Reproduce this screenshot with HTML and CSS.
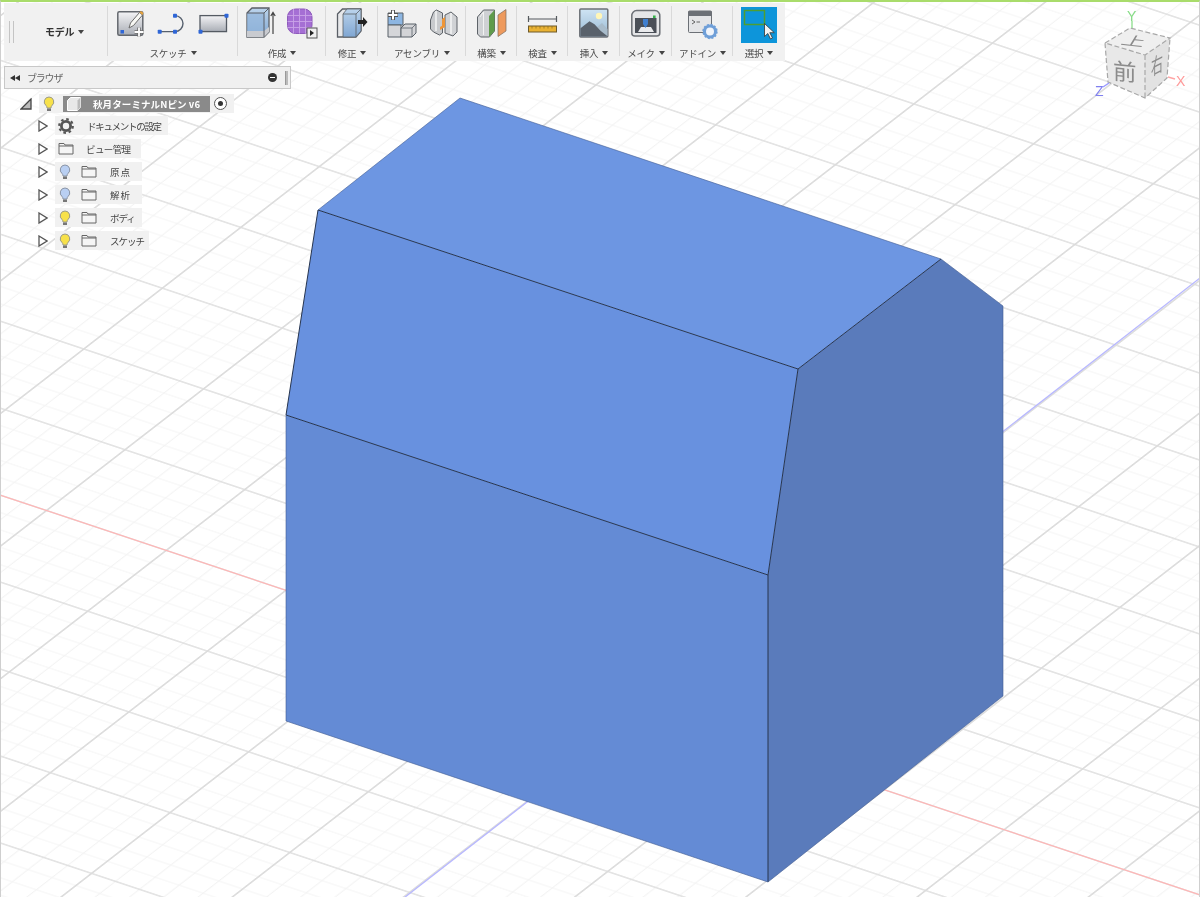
FILE: index.html
```html
<!DOCTYPE html>
<html lang="ja">
<head>
<meta charset="utf-8">
<title>モデル</title>
<link rel="stylesheet" href="styles.css">
</head>
<body>
<div class="app">
  <svg class="scene" viewBox="0 0 1200 897" width="1200" height="897">
    <defs>
      <pattern id="grid" width="100" height="100" patternUnits="userSpaceOnUse" patternTransform="matrix(1.197 0.399 0.785 -0.608 645 710)">
        <path class="minor" d="M20 0V100M40 0V100M60 0V100M80 0V100M0 20H100M0 40H100M0 60H100M0 80H100"/>
        <path class="major" d="M0 0V100M100 0V100M0 0H100M0 100H100"/>
      </pattern>
    </defs>
    <rect width="1200" height="897" fill="url(#grid)"/>
    <path class="axis-x" d="M0 495L1200 895"/>
    <path class="axis-z" d="M400 901L1200 278"/>
    <polygon class="f-top" points="460,98 941,259 798,369 318,210"/>
    <polygon class="f-slant" points="318,210 798,369 768,575 286,415"/>
    <polygon class="f-front" points="286,415 768,575 768,882 286,721"/>
    <polygon class="f-side" points="941,259 1003,306 1003,696 768,882 768,575 798,369"/>
    <path class="edge" d="M318 210L798 369L941 259M286 415L768 575L798 369M768 575V882M318 210L286 415"/>
    <path class="edge-soft" d="M318 210L460 98L941 259L1003 306V696L768 882L286 721V415"/>
  </svg>

  <div class="ui">
    <header class="toolbar">
      <div class="group group-mode">
        <span class="grip"></span>
        <span class="mode">モデル<i class="caret"></i></span>
      </div>
      <section class="group">
        <div class="icons icons-sketch">
          <svg viewBox="119 7 30 32" width="30" height="32"><defs><linearGradient id="plate" x1="0" y1="0" x2="0" y2="1"><stop offset="0" stop-color="#f4f4f6"/><stop offset="1" stop-color="#a9adb5"/></linearGradient></defs><rect x="119.800" y="11.800" width="25" height="23.500" rx="1.500" fill="url(#plate)" stroke="#64686e" stroke-width="1.500"/><path d="M131 28l1.500-5 9-10.500 3 2.500-9 10.500z" fill="#f8f8f4" stroke="#6b6b6b"/><path d="M141.500 12.500l1.500-1.500 2.500 2-1.200 2z" fill="#e8a33c"/><rect x="122.500" y="30" width="3.500" height="3.500" fill="#2f66d6"/><path d="M141 27.500v9M136.500 32h9" stroke="#6b6b6b" stroke-width="3.500"/><path d="M141 27.500v9M136.500 32h9" stroke="#fff" stroke-width="1.800"/></svg>
          <svg viewBox="157 7 34 32" width="34" height="32"><path d="M161.600 31.600H177A8 8 0 0 0 177 15.600" fill="none" stroke="#56606e" stroke-width="1.400"/><rect x="159.700" y="29.700" width="4" height="4" rx=".8" fill="#2f66d6"/><rect x="175" y="29.700" width="4" height="4" rx=".8" fill="#2f66d6"/><rect x="175" y="13.700" width="4" height="4" rx=".8" fill="#2f66d6"/></svg>
          <svg viewBox="199 7 33 32" width="33" height="32"><rect x="202" y="15.600" width="26.500" height="16" fill="url(#plate)" stroke="#555b63" stroke-width="1.300"/><rect x="226.500" y="13.800" width="4" height="4" rx=".8" fill="#2f66d6"/><rect x="200.500" y="29.700" width="4" height="4" rx=".8" fill="#2f66d6"/></svg>
        </div>
        <div class="label"><span>スケッチ</span><i class="caret"></i></div>
      </section>
      <section class="group">
        <div class="icons icons-create">
          <svg viewBox="247 7 32 32" width="32" height="32"><defs><linearGradient id="blue" x1="0" y1="0" x2="0" y2="1"><stop offset="0" stop-color="#bcd4ec"/><stop offset="1" stop-color="#7fa6d2"/></linearGradient></defs><path d="M248 13l5-5h17v24l-5 5h-17z" fill="url(#blue)" stroke="#5a5f66" stroke-width="1.300"/><path d="M248 13h17v18h-17z" fill="#94b6dc" opacity=".7"/><path d="M248 31h17l5-4v5l-5 5h-17z" fill="#c9cbd0"/><path d="M248 13h17l5-5M265 13v24" fill="none" stroke="#5a5f66"/><path d="M274 34V13M271.800 16l2.200-3.500 2.200 3.500" fill="none" stroke="#444" stroke-width="1.200"/></svg>
          <svg viewBox="288 7 31 32" width="31" height="32"><rect x="288.500" y="9" width="24.500" height="24.500" rx="8" fill="#a56fd4" stroke="#8e5bbb"/><path d="M288.500 15.500h24.500M288.500 21.500h24.500M288.500 27.500h24.500M294.500 9v24.500M300.500 9v24.500M306.500 9v24.500" stroke="#c9a4e8" stroke-width=".9"/><rect x="308" y="28" width="10" height="10" fill="#f0f0f0" stroke="#555"/><path d="M311 30l4 3-4 3z" fill="#222"/></svg>
        </div>
        <div class="label"><span>作成</span><i class="caret"></i></div>
      </section>
      <section class="group">
        <div class="icons">
          <svg viewBox="337 7 31 32" width="31" height="32"><path d="M337.500 14l5-5h18.500v22l-5 6h-18.500z" fill="#e7e8ea" stroke="#5a5f66" stroke-width="1.300"/><path d="M343 14l4-5h14v22l-5 6h-13z" fill="url(#blue)" stroke="#5a5f66" stroke-width=".8"/><path d="M343 14h13v23M356 14l5-5" fill="none" stroke="#5a5f66" stroke-width=".8"/><path d="M358 20h5v-3l4.500 5-4.500 5v-3h-5z" fill="#222"/></svg>
        </div>
        <div class="label"><span>修正</span><i class="caret"></i></div>
      </section>
      <section class="group">
        <div class="icons icons-assembly">
          <svg viewBox="386 7 30 32" width="30" height="32"><path d="M387 13h15v12h-15z" fill="#8db6e2" stroke="#596068"/><path d="M387 25h13v12h-13z" fill="#d5d6d9" stroke="#596068"/><path d="M400 28l4-4h11v9l-4 4h-11z" fill="#d3d4d7" stroke="#596068"/><path d="M400 28h11v9M411 28l4-4" fill="none" stroke="#596068" stroke-width=".8"/><path d="M392 10v10M387 15h10" stroke="#555" stroke-width="4"/><path d="M392 10.500v9M387.500 15h9" stroke="#fff" stroke-width="2"/></svg>
          <svg viewBox="428 7 29 32" width="29" height="32"><path d="M429.500 20l3-8 3-2 6 3v20l-3 2-6-3-3-3z" fill="#c8cacd" stroke="#5e6369"/><path d="M435 11v20" stroke="#f4f4f4" stroke-width="1.500"/><path d="M444 15l6-3 6 5v15l-4 4-8-3z" fill="#d0d2d5" stroke="#5e6369"/><path d="M450 13v21" stroke="#f4f4f4" stroke-width="1.500"/><path d="M441 19l3-2v9l-3 2z" fill="#ef9637"/><path d="M439 27l5-3v3l-5 3z" fill="#ef9637"/></svg>
        </div>
        <div class="label"><span>アセンブリ</span><i class="caret"></i></div>
      </section>
      <section class="group">
        <div class="icons">
          <svg viewBox="477 7 30 32" width="30" height="32"><path d="M477.500 17l6-7h11v21l-5 6h-9l-3-3z" fill="#cfd1d4" stroke="#5e6369"/><path d="M489 16l5.500-6v21l-5.500 6z" fill="#5f9b4b"/><path d="M480 17l3.500-5v23" fill="none" stroke="#f2f2f2"/><path d="M498 15l8-5.500V31l-8 5.500z" fill="#ee9a5d" stroke="#7c6a5c" stroke-width=".7"/></svg>
        </div>
        <div class="label"><span>構築</span><i class="caret"></i></div>
      </section>
      <section class="group">
        <div class="icons">
          <svg viewBox="528 7 30 32" width="30" height="32"><path d="M528.500 19h28M528.500 16v6M556.500 16v6" fill="none" stroke="#55595e" stroke-width="1.200"/><rect x="528.500" y="26" width="28" height="6" fill="#e9b233" stroke="#6e5a2a"/><path d="M532 26v2.500M536 26v2.500M540 26v2.500M544 26v2.500M548 26v2.500M552 26v2.500" stroke="#8a6b1f" stroke-width=".7"/></svg>
        </div>
        <div class="label"><span>検査</span><i class="caret"></i></div>
      </section>
      <section class="group">
        <div class="icons">
          <svg viewBox="580 7 30 32" width="30" height="32"><defs><linearGradient id="sky" x1="0" y1="0" x2="0" y2="1"><stop offset="0" stop-color="#cfe4f4"/><stop offset="1" stop-color="#97b8d2"/></linearGradient></defs><rect x="580.800" y="9" width="28" height="28" rx="1" fill="url(#sky)" stroke="#6c7076" stroke-width="1.500"/><circle cx="600" cy="16" r="3.200" fill="#fff6b8"/><path d="M597 28l6-5 5.500 6v7h-12z" fill="#a9bccb"/><path d="M581.500 36.300v-8l9-7 5 3 6 6.500 7 5.500z" fill="#59616b"/></svg>
        </div>
        <div class="label"><span>挿入</span><i class="caret"></i></div>
      </section>
      <section class="group">
        <div class="icons">
          <svg viewBox="632 7 30 32" width="30" height="32"><path d="M632.800 16a5 5 0 0 1 5-5.500h18a5 5 0 0 1 5 5.500v17a3 3 0 0 1-3 3h-22a3 3 0 0 1-3-3z" fill="#e4e5e7" stroke="#6c7076" stroke-width="1.500"/><rect x="636" y="18" width="21.500" height="15" fill="#4a4f57"/><path d="M639 32l3-5h10l3 5z" fill="#e9eaec"/><path d="M644 19h5v5l-2.500 4-2.500-4z" fill="#3f7fcf"/><rect x="654" y="15.500" width="2.600" height="2.600" fill="#36b24a"/></svg>
        </div>
        <div class="label"><span>メイク</span><i class="caret"></i></div>
      </section>
      <section class="group">
        <div class="icons">
          <svg viewBox="688 7 30 32" width="30" height="32"><rect x="688.500" y="11" width="23" height="21.500" rx="1" fill="#e4e5e7" stroke="#6c7076"/><rect x="688.500" y="11" width="23" height="5" fill="#6c7076"/><path d="M692 20l3 2-3 2M696.500 22h3.500" fill="none" stroke="#555" stroke-width=".9"/><circle cx="710" cy="31.500" r="5.500" fill="#f0f4fa" stroke="#6f9fd8" stroke-width="3"/><circle cx="710" cy="31.500" r="6.800" fill="none" stroke="#6f9fd8" stroke-width="1.800" stroke-dasharray="2 1.600"/><circle cx="710" cy="31.500" r="2.300" fill="#f0f4fa"/></svg>
        </div>
        <div class="label"><span>アドイン</span><i class="caret"></i></div>
      </section>
      <section class="group group-last">
        <div class="icons">
          <svg viewBox="741 6 36 36" width="36" height="36"><rect x="741" y="6" width="36" height="36" fill="#0d95da"/><rect x="744.500" y="9.500" width="20" height="14" fill="none" stroke="#4f9e31" stroke-width="1.500"/><path d="M764.500 22.500v13l3.300-3 2.700 5.500 2-1-2.700-5.300h4.500z" fill="#f2f2f2" stroke="#333" stroke-width=".8"/></svg>
        </div>
        <div class="label"><span>選択</span><i class="caret"></i></div>
      </section>
    </header>

    <div class="browser">
      <svg class="collapse" viewBox="0 0 10 6" width="10" height="6"><path d="M5 0v6L0 3zM10 0v6L5 3z" fill="#333"/></svg>
      <span class="browser-title">ブラウザ</span>
      <span class="minus"></span>
      <span class="browser-grip"></span>
    </div>

    <ul class="tree">
      <li class="row row-root">
        <svg class="root-toggle" viewBox="0 0 12 12" width="12" height="12"><path d="M11 1v10H1z" fill="#bbb" stroke="#444" stroke-width="1.300"/></svg>
        <div class="row-body root-body">
          <svg class="bulb" viewBox="0 0 12 16" width="12" height="16"><path d="M6 1a4.800 4.800 0 0 0-3 8.500c.7.700 1 1.500 1 2.500h4c0-1 .3-1.800 1-2.500A4.800 4.800 0 0 0 6 1z" fill="#f7e14a" stroke="#9a9a8a"/><rect x="4" y="12.500" width="4" height="2.500" fill="#777"/></svg>
          <div class="doc-name">
            <svg viewBox="0 0 16 16" width="16" height="16"><path d="M1.500 4.500L4.500 1.500h10v10l-3 3h-10z" fill="#e8e8e8" stroke="#fff"/><path d="M11.500 4.500v10l3-3v-10z" fill="#bbb"/></svg>
            <span>秋月ターミナルNピン v6</span>
          </div>
          <span class="radio"></span>
        </div>
      </li>
      <li class="row">
        <svg class="toggle" viewBox="0 0 10 12" width="10" height="12"><path d="M1 1l8 5-8 5z" fill="#fff" stroke="#555" stroke-width="1.300"/></svg>
        <div class="row-body w-doc">
          <svg class="gear" viewBox="0 0 16 16" width="16" height="16"><circle cx="8" cy="8" r="4.600" fill="none" stroke="#555" stroke-width="2.800"/><circle cx="8" cy="8" r="6.800" fill="none" stroke="#555" stroke-width="2.200" stroke-dasharray="2.600 2.740"/></svg>
          <span class="row-text text-doc">ドキュメントの設定</span>
        </div>
      </li>
      <li class="row">
        <svg class="toggle" viewBox="0 0 10 12" width="10" height="12"><path d="M1 1l8 5-8 5z" fill="#fff" stroke="#555" stroke-width="1.300"/></svg>
        <div class="row-body w-view">
          <svg class="folder folder-first" viewBox="0 0 16 13" width="16" height="13"><path d="M1 12V1.500h5l1 1.500h8v9zM1 4h14" fill="#f5f5f5" stroke="#666"/></svg>
          <span class="row-text text-view">ビュー管理</span>
        </div>
      </li>
      <li class="row">
        <svg class="toggle" viewBox="0 0 10 12" width="10" height="12"><path d="M1 1l8 5-8 5z" fill="#fff" stroke="#555" stroke-width="1.300"/></svg>
        <div class="row-body w-folder">
          <svg class="bulb" viewBox="0 0 12 16" width="12" height="16"><path d="M6 1a4.800 4.800 0 0 0-3 8.500c.7.700 1 1.500 1 2.500h4c0-1 .3-1.800 1-2.500A4.800 4.800 0 0 0 6 1z" fill="#b9cff2" stroke="#8a94a5"/><rect x="4" y="12.500" width="4" height="2.500" fill="#777"/></svg>
          <svg class="folder" viewBox="0 0 16 13" width="16" height="13"><path d="M1 12V1.500h5l1 1.500h8v9zM1 4h14" fill="#f5f5f5" stroke="#666"/></svg>
          <span class="row-text">原点</span>
        </div>
      </li>
      <li class="row">
        <svg class="toggle" viewBox="0 0 10 12" width="10" height="12"><path d="M1 1l8 5-8 5z" fill="#fff" stroke="#555" stroke-width="1.300"/></svg>
        <div class="row-body w-folder">
          <svg class="bulb" viewBox="0 0 12 16" width="12" height="16"><path d="M6 1a4.800 4.800 0 0 0-3 8.500c.7.700 1 1.500 1 2.500h4c0-1 .3-1.800 1-2.500A4.800 4.800 0 0 0 6 1z" fill="#b9cff2" stroke="#8a94a5"/><rect x="4" y="12.500" width="4" height="2.500" fill="#777"/></svg>
          <svg class="folder" viewBox="0 0 16 13" width="16" height="13"><path d="M1 12V1.500h5l1 1.500h8v9zM1 4h14" fill="#f5f5f5" stroke="#666"/></svg>
          <span class="row-text">解析</span>
        </div>
      </li>
      <li class="row">
        <svg class="toggle" viewBox="0 0 10 12" width="10" height="12"><path d="M1 1l8 5-8 5z" fill="#fff" stroke="#555" stroke-width="1.300"/></svg>
        <div class="row-body w-folder">
          <svg class="bulb" viewBox="0 0 12 16" width="12" height="16"><path d="M6 1a4.800 4.800 0 0 0-3 8.500c.7.700 1 1.500 1 2.500h4c0-1 .3-1.800 1-2.500A4.800 4.800 0 0 0 6 1z" fill="#f7e14a" stroke="#9a9a8a"/><rect x="4" y="12.500" width="4" height="2.500" fill="#777"/></svg>
          <svg class="folder" viewBox="0 0 16 13" width="16" height="13"><path d="M1 12V1.500h5l1 1.500h8v9zM1 4h14" fill="#f5f5f5" stroke="#666"/></svg>
          <span class="row-text row-kana">ボディ</span>
        </div>
      </li>
      <li class="row">
        <svg class="toggle" viewBox="0 0 10 12" width="10" height="12"><path d="M1 1l8 5-8 5z" fill="#fff" stroke="#555" stroke-width="1.300"/></svg>
        <div class="row-body w-sketch">
          <svg class="bulb" viewBox="0 0 12 16" width="12" height="16"><path d="M6 1a4.800 4.800 0 0 0-3 8.500c.7.700 1 1.500 1 2.500h4c0-1 .3-1.800 1-2.500A4.800 4.800 0 0 0 6 1z" fill="#f7e14a" stroke="#9a9a8a"/><rect x="4" y="12.500" width="4" height="2.500" fill="#777"/></svg>
          <svg class="folder" viewBox="0 0 16 13" width="16" height="13"><path d="M1 12V1.500h5l1 1.500h8v9zM1 4h14" fill="#f5f5f5" stroke="#666"/></svg>
          <span class="row-text row-kana">スケッチ</span>
        </div>
      </li>
    </ul>
  </div>

  <svg class="viewcube" viewBox="1085 5 105 100" width="105" height="100">
    <path class="cube-top" d="M1105 43L1130 28L1170 38L1145 55Z"/>
    <path class="cube-front" d="M1105 43L1145 55V98L1108 82Z"/>
    <path class="cube-right" d="M1145 55L1170 38L1167 78L1145 98Z"/>
    <path class="cube-edge" d="M1105 43L1130 28L1170 38L1145 55L1105 43L1108 82L1145 98L1167 78L1170 38M1145 55V98"/>
    <text class="cube-text" transform="matrix(.95 .1 -.3 .5 1120 44.300)" font-size="24">上</text>
    <text class="cube-text" transform="matrix(.98 .1 0 .95 1113 79)" font-size="24">前</text>
    <text class="cube-text" transform="matrix(.5 -.25 0 .9 1151 76)" font-size="24">右</text>
    <path class="ax-y" d="M1132 28V21"/>
    <path class="ax-x" d="M1168 77L1175 79"/>
    <path class="ax-z" d="M1103 87L1109 83"/>
    <text class="lab lab-y" x="1127" y="21">Y</text>
    <text class="lab lab-x" x="1176" y="86">X</text>
    <text class="lab lab-z" x="1095" y="96">Z</text>
  </svg>
</div>
</body>
</html>
```
FILE: styles.css
```css
* { box-sizing: border-box; }
html, body { margin: 0; padding: 0; background: #fff; }
body { font-family: "Noto Sans CJK JP", "Noto Sans", sans-serif; }
ul { list-style: none; margin: 0; padding: 0; }

.app {
  position: relative;
  width: 1200px;
  height: 897px;
  overflow: hidden;
  background: #fff;
  border-top: 2px solid #a9dc6b;
  border-left: 1px solid #cfcfcf;
  border-right: 1px solid #cfcfcf;
}

/* 3D viewport */
.scene { position: absolute; left: -1px; top: -2px; filter: blur(.3px); }
.minor { stroke: #f3f3f3; stroke-width: 1; fill: none; }
.major { stroke: #dcdcdc; stroke-width: 1.500; fill: none; }
.axis-x { stroke: #ffb6b6; stroke-width: 1.200; fill: none; }
.axis-z { stroke: #b8b8ff; stroke-width: 1.300; fill: none; }
.f-top { fill: #6d96e2; }
.f-slant { fill: #6891df; }
.f-front { fill: #648bd5; }
.f-side { fill: #5a7bbb; }
.edge { stroke: #27354f; stroke-width: 1; fill: none; }
.edge-soft { stroke: #3f5a90; stroke-width: .6; fill: none; }

/* Toolbar and browser */
.ui { position: relative; padding: 1px 0 0 3px; filter: blur(.45px); }
.toolbar {
  display: grid;
  grid-template-columns: 104px 130px 88px 52px 88px 51px 51px 52px 52px 61px 52px;
  width: 781px;
  height: 58px;
  background: #f1f1f1;
}
.group {
  position: relative;
  display: flex;
  flex-direction: column;
  align-items: center;
  padding-top: 4px;
}
.group::after {
  content: "";
  position: absolute;
  right: 0;
  top: 3px;
  bottom: 5px;
  width: 1px;
  background: #d9d9d9;
}
.group-last::after { display: none; }
.group-mode { flex-direction: row; align-items: center; padding: 0 0 0 5px; }
.grip {
  width: 5px;
  height: 22px;
  margin-top: -1px;
  border-left: 1px solid #c4c4c4;
  border-right: 1px solid #c4c4c4;
}
.mode {
  margin-left: 31px;
  margin-top: -1px;
  font-size: 10px;
  font-weight: 700;
  color: #333;
  letter-spacing: -.3px;
  display: flex;
  align-items: center;
}
.icons { display: flex; height: 36px; gap: 8px; align-items: flex-start; }
.icons-create { gap: 9px; }
.icons-assembly { gap: 12px; }
.icons svg { display: block; flex: none; overflow: visible; }
.label {
  display: flex;
  align-items: center;
  height: 14px;
  margin-top: 3px;
  font-size: 9.500px;
  line-height: 14px;
  color: #4a4a4a;
  white-space: nowrap;
}
.label span { letter-spacing: -.2px; }
.caret {
  display: inline-block;
  width: 0;
  height: 0;
  margin-left: 4px;
  border-left: 3px solid transparent;
  border-right: 3px solid transparent;
  border-top: 4px solid #444;
}

.browser {
  display: flex;
  align-items: center;
  width: 287px;
  height: 23px;
  margin-top: 5px;
  padding: 0 2px 0 5px;
  background: #f0f0f0;
  border: 1px solid #c8c8c8;
  color: #666;
}
.browser-title { margin-left: 7px; font-size: 10px; letter-spacing: -1.200px; }
.minus {
  position: relative;
  width: 9px;
  height: 9px;
  margin-left: auto;
  border-radius: 50%;
  background: #333;
}
.minus::before {
  content: "";
  position: absolute;
  left: 2px;
  right: 2px;
  top: 4px;
  height: 1px;
  background: #fff;
}
.browser-grip {
  width: 3px;
  height: 14px;
  margin-left: 8px;
  background: #bbb;
  border-left: 1px solid #999;
}

.tree { margin-top: 5px; }
.row {
  display: flex;
  align-items: center;
  height: 19px;
  margin: 0 0 4px 34px;
  font-size: 9.500px;
  color: #444;
}
.toggle { flex: none; margin-right: 7px; }
.row-body {
  display: flex;
  align-items: center;
  height: 19px;
  background: #f1f1f1;
}
.row-text { letter-spacing: 1px; margin-left: 13px; white-space: nowrap; }
.row-kana { letter-spacing: -1px; }
.w-doc { width: 113px; padding-left: 3px; }
.w-view { width: 86px; padding-left: 3px; }
.w-folder { width: 87px; padding-left: 4px; }
.w-sketch { width: 94px; padding-left: 4px; }
.bulb { flex: none; }
.folder { flex: none; margin-left: 10px; }
.folder-first { margin-left: 0; }
.text-doc { margin-left: 13px; letter-spacing: -1.300px; }
.text-view { margin-left: 12px; letter-spacing: -.6px; }

.row-root { height: 19px; margin: 0 0 3px 16px; }
.root-toggle { flex: none; margin-right: 7px; }
.root-body { width: 195px; padding-left: 4px; }
.doc-name {
  display: flex;
  align-items: center;
  width: 147px;
  height: 16px;
  margin-left: 8px;
  padding-left: 3px;
  background: #8a8a8a;
  color: #fff;
  font-weight: 700;
  font-size: 9.500px;
  letter-spacing: .1px;
  white-space: nowrap;
}
.doc-name span { margin-left: 11px; }
.radio {
  position: relative;
  width: 13px;
  height: 13px;
  margin-left: 4px;
  border: 1px solid #555;
  border-radius: 50%;
  background: #fff;
}
.radio::before {
  content: "";
  position: absolute;
  left: 3px;
  top: 3px;
  width: 5px;
  height: 5px;
  border-radius: 50%;
  background: #333;
}

/* ViewCube */
.viewcube { position: absolute; left: 1084px; top: 3px; filter: blur(.5px); overflow: visible; }
.cube-top { fill: #efefef; }
.cube-front { fill: #e8e8e8; }
.cube-right { fill: #e2e2e2; }
.cube-edge { fill: none; stroke: #a8a8a8; stroke-width: 1.200; stroke-dasharray: 5 2.500; }
.cube-text { fill: #8b8b8b; font-family: "Noto Sans CJK JP", sans-serif; }
.ax-y { stroke: #9be29b; stroke-width: 1.500; }
.ax-x { stroke: #ffa5a5; stroke-width: 1.500; }
.ax-z { stroke: #9a9aff; stroke-width: 1.500; }
.lab { font-family: "Liberation Sans", sans-serif; font-size: 14px; }
.lab-y { fill: #86dc86; }
.lab-x { fill: #ff9a9a; }
.lab-z { fill: #8080f0; }
```
